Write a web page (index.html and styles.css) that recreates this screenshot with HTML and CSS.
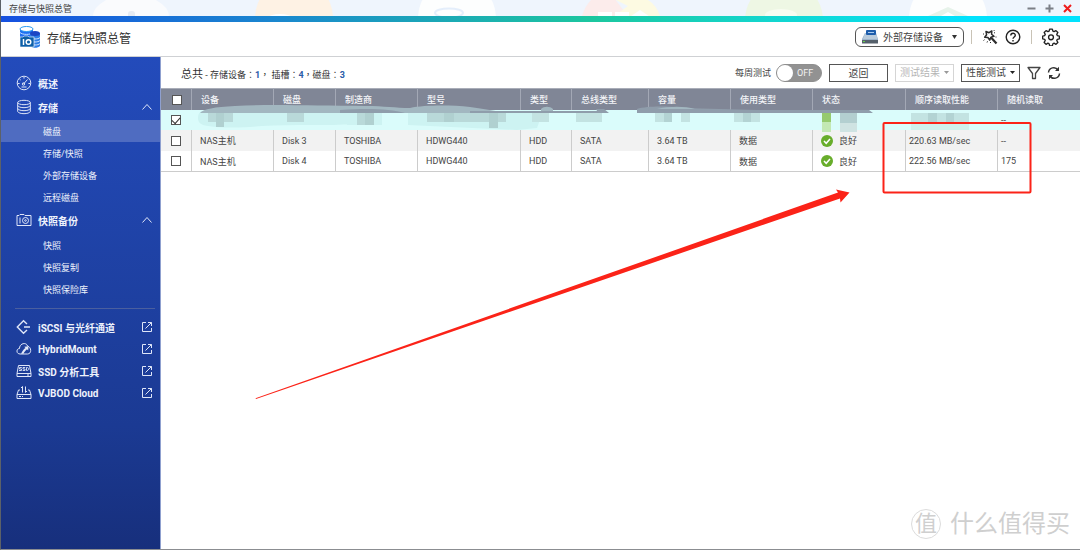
FILE: index.html
```html
<!DOCTYPE html>
<html lang="zh-CN">
<head>
<meta charset="utf-8">
<meta name="viewport" content="width=device-width, initial-scale=1">
<title>存储与快照总管</title>
<link rel="stylesheet" href="styles.css">
</head>
<body>
<div class="window">
  <div class="titlebar">
    <svg class="desktop-art" width="1080" height="16" viewBox="0 0 1080 16" aria-hidden="true">
      <ellipse cx="130" cy="16" rx="38" ry="21" fill="#fafbfd"/>
      <rect x="127" y="11" width="7" height="8" rx="3" fill="#e6ebf3"/>
      <circle cx="293" cy="18" r="39" fill="#fef2e4"/>
      <ellipse cx="279" cy="17" rx="11" ry="3" fill="#fff"/>
      <circle cx="456" cy="18" r="39" fill="#fdfefe"/>
      <ellipse cx="448" cy="13" rx="14" ry="4.500" fill="none" stroke="#e4eefb" stroke-width="2"/>
      <path d="M581 16c4-14 15-24 26-26l16 21-10 5z" fill="#fceceb"/>
      <path d="M607-4h30c12 3 19 10 22 20h-46l14-10z" fill="#fdfae2"/>
      <path d="M597 12h14v4h-14zM614 12h14v4h-14zM630 16l9-6 9 6z" fill="#fff"/>
      <circle cx="783" cy="20" r="39" fill="#eef7e4"/>
      <ellipse cx="780" cy="15" rx="16" ry="6" fill="#f8fcf1"/>
      <circle cx="947" cy="18" r="39" fill="#fdfefe"/>
      <path d="M927 16l20-9 20 9z" fill="#e7f3ea"/><path d="M940 16l7-4 7 4z" fill="#fff"/>
    </svg>
    <span class="window-title">存储与快照总管</span>
    <div class="window-buttons">
      <button class="window-button" aria-label="最小化"><svg width="9" height="9" viewBox="0 0 9 9"><path d="M.5 4.500h8" stroke="#7b7f86" stroke-width="2"/></svg></button>
      <button class="window-button" aria-label="最大化"><svg width="9" height="9" viewBox="0 0 9 9"><path d="M.5 4.500h8M4.500.5v8" stroke="#7b7f86" stroke-width="2"/></svg></button>
      <button class="window-button" aria-label="关闭"><svg width="9" height="9" viewBox="0 0 9 9"><path d="M1 1l7 7M8 1L1 8" stroke="#ee1c1c" stroke-width="2"/></svg></button>
    </div>
  </div>
  <div class="accent-strip"></div>

  <header class="app-header">
    <svg class="app-logo" width="22" height="22" viewBox="0 0 22 22" aria-hidden="true">
      <path d="M1 3v9h13V3z" fill="#1f6ff2"/>
      <ellipse cx="7.500" cy="3" rx="6.500" ry="2.500" fill="#fff" stroke="#2b9bf0"/>
      <path d="M1 6.500c2 2.500 11 2.500 13 0" fill="none" stroke="#bfe0ff"/>
      <path d="M11 7v13c2 2.400 8 2.400 10 0V7z" fill="#2f7fe6"/>
      <ellipse cx="16" cy="7.500" rx="5" ry="2.500" fill="#1c46c4"/>
      <path d="M11 11.500c2 2 8 2 10 0M11 14.500c2 2 8 2 10 0M11 17.500c2 2 8 2 10 0" fill="none" stroke="#cfe4ff"/>
      <path d="M1 11h3l1-1h4l1 1h5v10H1z" fill="#0c5fa8" stroke="#fff" stroke-width=".6"/>
      <path d="M4.500 13v6" stroke="#fff" stroke-width="1.500"/><circle cx="9.500" cy="16" r="2.300" fill="none" stroke="#fff" stroke-width="1.500"/>
    </svg>
    <h1 class="app-title">存储与快照总管</h1>
    <div class="header-tools">
      <div class="device-picker">
        <svg width="16" height="14" viewBox="0 0 16 14" aria-hidden="true"><path d="M3 3h11l2 6v4H0V9z" fill="#9db4cb"/><path d="M3 3h11l1.500 6H1z" fill="#b9cbdc"/><path d="M0 10h16v3.500H0z" fill="#56616c"/><path d="M1 11.500h2" stroke="#65d34a"/><rect x="4" width="10" height="5" rx="1" fill="#1d5dac"/><path d="M6 2.500h6" stroke="#a9ccf2"/></svg>
        <select class="device-select" aria-label="外部存储设备"><option>外部存储设备</option></select>
        <svg class="caret" width="5" height="4" viewBox="0 0 5 4" aria-hidden="true"><path d="M0 0h5L2.500 4z" fill="#333"/></svg>
      </div>
      <span class="separator"></span>
      <button class="icon-button" aria-label="工具"><svg width="16" height="16" viewBox="0 0 16 16" fill="none" stroke="#2c2c2c" stroke-linejoin="round"><path d="M4 2.500l3 1.200L9.800 2l-.2 3.200L12 7.300l-3 .8-1.300 3-1.800-2.600-3.200-.2 1.900-2.600z" stroke-width="1.500"/><path d="M9 8.500l5.500 6" stroke-width="2.200"/><path d="M1 5h1M1.500 11.500l1-.8M5 13.500l.5-1.200M13 3.500l-1 .6M14.500 8h-1M12.500 1l-.7.9M8.500 14v-1" stroke-width="1"/></svg></button>
      <button class="icon-button" aria-label="帮助"><svg width="16" height="16" viewBox="0 0 16 16" fill="none" stroke="#222" stroke-width="1.400"><circle cx="8" cy="8" r="6.800"/><path d="M5.800 6.500c0-3 4.500-3 4.500-.3C10.300 8 8 7.900 8 9.800M8 11v1.500"/></svg></button>
      <span class="separator"></span>
      <button class="icon-button" aria-label="设置"><svg width="18" height="18" viewBox="0 0 20 20" fill="none" stroke="#222" stroke-width="1.500" stroke-linejoin="round"><path d="M8.500 1.200h3l.6 2.300 1.300.6 2.100-1.200 2.100 2.100-1.200 2.100.6 1.300 2.300.6v3l-2.300.6-.6 1.300 1.200 2.100-2.100 2.100-2.100-1.200-1.300.6-.6 2.300h-3l-.6-2.300-1.300-.6-2.100 1.200-2.100-2.100 1.200-2.100-.6-1.300-2.300-.6v-3L3 8.400l.6-1.300L2.400 5l2.100-2.100 2.100 1.200 1.300-.6z"/><circle cx="10" cy="10.300" r="2.700"/></svg></button>
    </div>
  </header>

  <div class="workspace">
    <nav class="sidebar" aria-label="主菜单">
      <a class="nav-group" href="#overview"><svg class="nav-icon" width="16" height="16" viewBox="0 0 16 16"><circle cx="8" cy="8" r="6.800"/><path d="M8 2v1.600M3.500 4l1.200 1M2 8.500h1.600M12.400 8.500H14M7.500 9l4-4.500M5.500 12h5"/><circle cx="7.500" cy="9" r="1.200"/></svg>概述</a>
      <a class="nav-group" href="#storage"><svg class="nav-icon" width="16" height="16" viewBox="0 0 16 16"><ellipse cx="8" cy="3.500" rx="6.300" ry="2.200"/><path d="M1.700 3.500v9c1 2.900 11.600 2.900 12.600 0v-9M1.700 6.500c1 2.900 11.600 2.900 12.600 0M1.700 9.500c1 2.900 11.600 2.900 12.600 0"/></svg>存储<svg class="chevron" width="10" height="6" viewBox="0 0 10 6"><path d="M.5 5.500l4.500-5 4.500 5"/></svg></a>
      <a class="nav-item nav-item-active" href="#disks" aria-current="page">磁盘</a>
      <a class="nav-item" href="#snapshots">存储/快照</a>
      <a class="nav-item" href="#external">外部存储设备</a>
      <a class="nav-item" href="#remote">远程磁盘</a>
      <a class="nav-group nav-group-spaced" href="#backup"><svg class="nav-icon" width="16" height="16" viewBox="0 0 16 16"><path d="M1 3.500h2l1-1h4l1 1h6v10H1zM4 5.500v6"/><circle cx="9.500" cy="8.500" r="3"/><circle cx="9.500" cy="8.500" r=".8"/></svg>快照备份<svg class="chevron" width="10" height="6" viewBox="0 0 10 6"><path d="M.5 5.500l4.500-5 4.500 5"/></svg></a>
      <a class="nav-item" href="#snapshot">快照</a>
      <a class="nav-item" href="#replica">快照复制</a>
      <a class="nav-item" href="#vault">快照保险库</a>
      <hr class="nav-divider">
      <a class="nav-link" href="#iscsi"><svg class="nav-icon" width="16" height="16" viewBox="0 0 16 16"><path d="M11 5L7.500 1.700 1.300 8l6.200 6.300L11 11M8 8h6" stroke-width="1.400"/></svg>iSCSI 与光纤通道<svg class="external" width="12" height="12" viewBox="0 0 12 12"><path d="M5 1.500H1.500v9h9V7M7 1.500h3.500V5M10.500 1.500L4.500 7.500"/></svg></a>
      <a class="nav-link" href="#hybridmount"><svg class="nav-icon" width="16" height="16" viewBox="0 0 16 16"><path d="M4 13c-4 0-4-5.500-.5-5.500C3.500 2 10.500 1 11.500 5c4 1 4.500 8 0 8z"/><path d="M5 12.800C6.500 9.500 8 8 9.500 7L8.300 5.800l4.200-.6-.3 4.200-1.200-1.200c-1.500 1.200-3 3-3.500 4.600z" fill="#e3e9f8" stroke="none"/></svg>HybridMount<svg class="external" width="12" height="12" viewBox="0 0 12 12"><path d="M5 1.500H1.500v9h9V7M7 1.500h3.500V5M10.500 1.500L4.500 7.500"/></svg></a>
      <a class="nav-link" href="#ssd"><svg class="nav-icon" width="16" height="16" viewBox="0 0 16 16"><path d="M2.500 2.500h11l1.500 8v3H1v-3zM1 10.500h14M11 12h2"/><path d="M5.800 4.500H3.500V6h2v1.500H3M9.200 4.500H7V6h2v1.500H6.700M10.500 4.500v3c3 .2 3-3.200 0-3z" stroke-width=".9"/></svg>SSD 分析工具<svg class="external" width="12" height="12" viewBox="0 0 12 12"><path d="M5 1.500H1.500v9h9V7M7 1.500h3.500V5M10.500 1.500L4.500 7.500"/></svg></a>
      <a class="nav-link" href="#vjbod"><svg class="nav-icon" width="16" height="16" viewBox="0 0 16 16"><path d="M4 5H2.500L1 9.500v4h14v-4L13.500 5H12M1 9.500h14M3 11.500h2M6 11.500h1M6.500 7.500v-6L5 3M9.500 1.500v6L11 6"/></svg>VJBOD Cloud<svg class="external" width="12" height="12" viewBox="0 0 12 12"><path d="M5 1.500H1.500v9h9V7M7 1.500h3.500V5M10.500 1.500L4.500 7.500"/></svg></a>
    </nav>

    <main class="content">
      <div class="toolbar">
        <p class="summary"><span class="summary-label">总共</span> - 存储设备<span lang="zh-TW" class="mark">：</span><b class="count">1</b><span lang="zh-TW" class="mark">，</span> 插槽<span lang="zh-TW" class="mark">：</span><b class="count">4</b><span lang="zh-TW" class="mark">，</span>磁盘<span lang="zh-TW" class="mark">：</span><b class="count">3</b></p>
        <div class="toolbar-actions">
          <label class="weekly">每周测试
            <input class="weekly-input" type="checkbox" role="switch">
            <span class="switch"><span class="switch-knob"></span>OFF</span>
          </label>
          <button class="button">返回</button>
          <div class="picker picker-disabled"><select class="picker-select" aria-label="测试结果" disabled><option>测试结果</option></select><svg class="caret" width="5" height="3" viewBox="0 0 5 3" aria-hidden="true"><path d="M0 0h5L2.500 3z" fill="#999"/></svg></div>
          <div class="picker"><select class="picker-select" aria-label="性能测试"><option>性能测试</option></select><svg class="caret" width="5" height="3" viewBox="0 0 5 3" aria-hidden="true"><path d="M0 0h5L2.500 3z" fill="#222"/></svg></div>
          <button class="icon-button" aria-label="筛选"><svg width="14" height="14" viewBox="0 0 14 14" fill="none" stroke="#444" stroke-width="1.300" stroke-linejoin="round"><path d="M1 1.500h12L8.500 7.500v5h-3v-5z"/></svg></button>
          <button class="icon-button" aria-label="刷新"><svg width="14" height="14" viewBox="0 0 14 14" fill="none" stroke="#333" stroke-width="1.500"><path d="M1.500 6.500A5.200 5.200 0 0 1 11 4M12.500 7.500A5.200 5.200 0 0 1 3 10"/><path d="M12 .8V5H8zM2 13.200V9h4z" fill="#333" stroke="none"/></svg></button>
        </div>
      </div>

      <table class="disks">
        <colgroup><col class="w-check"><col class="w-wide"><col class="w-disk"><col class="w-wide"><col class="w-model"><col class="w-type"><col class="w-bus"><col class="w-wide"><col class="w-wide"><col class="w-status"><col class="w-speed"><col></colgroup>
        <thead>
          <tr><th><input class="check" type="checkbox" aria-label="全选"></th><th>设备</th><th>磁盘</th><th>制造商</th><th>型号</th><th>类型</th><th>总线类型</th><th>容量</th><th>使用类型</th><th>状态</th><th>顺序读取性能</th><th>随机读取</th></tr>
        </thead>
        <tbody>
          <tr class="row-selected"><td><input class="check" type="checkbox" checked aria-label="选择磁盘"></td><td></td><td></td><td></td><td></td><td></td><td></td><td></td><td></td><td></td><td></td><td class="reading">--</td></tr>
          <tr class="row-alt"><td><input class="check" type="checkbox" aria-label="选择 Disk 3"></td><td>NAS主机</td><td>Disk 3</td><td>TOSHIBA</td><td>HDWG440</td><td>HDD</td><td>SATA</td><td>3.64 TB</td><td>数据</td><td><span class="status"><svg width="12" height="12" viewBox="0 0 12 12" aria-hidden="true"><circle cx="6" cy="6" r="6" fill="#68ad2b"/><path d="M3 6l2.200 2.300L9 4" fill="none" stroke="#fff" stroke-width="1.500"/></svg>良好</span></td><td class="reading">220.63 MB/sec</td><td class="reading">--</td></tr>
          <tr><td><input class="check" type="checkbox" aria-label="选择 Disk 4"></td><td>NAS主机</td><td>Disk 4</td><td>TOSHIBA</td><td>HDWG440</td><td>HDD</td><td>SATA</td><td>3.64 TB</td><td>数据</td><td><span class="status"><svg width="12" height="12" viewBox="0 0 12 12" aria-hidden="true"><circle cx="6" cy="6" r="6" fill="#68ad2b"/><path d="M3 6l2.200 2.300L9 4" fill="none" stroke="#fff" stroke-width="1.500"/></svg>良好</span></td><td class="reading">222.56 MB/sec</td><td class="reading">175</td></tr>
        </tbody>
      </table>
    </main>
  </div>
</div>

<svg class="markup" width="1080" height="550" viewBox="0 0 1080 550" aria-hidden="true">
  <g>
    <path d="M198 118c0-6 4-8 10-8h140l4 3v11c-20 2-60 0-90 2-20 2-40 2-54 0-8-1-10-4-10-8zM347 111h35v14h-35zM408 111h135l-6 17-20 2-109-5z" fill="#cdf3f2"/>
    <path d="M200 113c4-4 14-6 35-7 40-2 80 0 130 0 20 0 30 2 45 2 15-3 40-3 60-1 14 2 26 4 37 6z" fill="#a2b7c0"/>
    <path d="M340 110c30-2 50-1 65 3h-65zM470 111h72v2h-72zM596 109h8l5 4h-72v-2h60zM637 109c10-3 30-3 45-1l75 2h112l4 3H637z" fill="#8f9dab"/>
    <path d="M541 109c3-3 9-3 12 0v2h-12zM657 109c12-3 28-3 38 0z" fill="#a2b7c0"/>
    <path d="M208 113h25v9h-25zM287 113h17v9h-17zM357 113h17v12h-17zM427 113h53v9h-53zM480 113h26v9h-26z" fill="#b9d9d9"/>
    <path d="M216 113h8v14h-8zM365 113h9v12h-9zM444 113h10v9h-10zM489 113h9v15h-9z" fill="#b0d0d0"/>
    <path d="M532 113h17v9h-17zM576 113h26v9h-26zM655 113h17v9h-17zM681 113h9v9h-9zM734 113h26v9h-26zM911 113h58v10h-58z" fill="#c3e3e2"/>
    <path d="M664 113h8v9h-8zM743 113h8v9h-8zM928 113h9v10h-9zM946 113h8v10h-8z" fill="#b3d3d3"/>
    <path d="M911 123h58v7h-58z" fill="#d0f0ec"/>
    <path d="M822 113h9v9h-9z" fill="#96ca6e"/><path d="M822 122h9v10h-9z" fill="#c3e8b4"/>
    <path d="M840 113h17v10h-17z" fill="#b3cfd0"/><path d="M840 123h17v9h-17z" fill="#cfe3e2"/>
  </g>
  <rect x="883.500" y="123" width="147" height="69.500" rx="1" fill="none" stroke="#fb2318" stroke-width="2"/>
  <path d="M255.500 398.300L838 192.500 836 189.500 849.500 192.500 840.500 202.500 840 198.500 256 399z" fill="#fb2318"/>
</svg>
<div class="watermark"><span class="watermark-badge">值</span>什么值得买</div>
</body>
</html>
```

FILE: styles.css
```css
* {
  box-sizing: border-box;
}

body {
  margin: 0;
  position: relative;
  font-family: Roboto, "Noto Sans CJK SC", sans-serif;
  font-size: 9px;
  color: #444;
  background: #fff;
}

button,
select {
  font: inherit;
  color: inherit;
  padding: 0;
  border: 0;
  background: none;
  appearance: none;
}

svg {
  display: block;
  flex: none;
}

.window {
  display: flex;
  flex-direction: column;
  min-height: 100vh;
  border-left: 1px solid #5c6168;
  border-bottom: 1px solid #8b8d91;
}

/* Title bar */
.titlebar {
  position: relative;
  display: flex;
  align-items: center;
  justify-content: space-between;
  height: 16px;
  padding: 0 8px;
  overflow: hidden;
  background: #eff5fd;
}

.desktop-art {
  position: absolute;
  top: 0;
  left: 0;
}

.window-title,
.window-buttons {
  position: relative;
}

.window-buttons {
  display: flex;
  gap: 9px;
}

.accent-strip {
  height: 6px;
  background: linear-gradient(90deg, #1550e0 0%, #1a86cf 25%, #1cc79f 55%, #14d5cb 70%, #02e2fd 90%);
}

/* Application header */
.app-header {
  display: flex;
  align-items: center;
  gap: 6px;
  height: 35px;
  padding: 0 20px 4px 18px;
  border-bottom: 1px solid #cfd1d4;
}

.app-title {
  margin: 0;
  font-size: 12px;
  font-weight: 400;
  color: #333;
}

.header-tools {
  display: flex;
  align-items: center;
  gap: 7px;
  margin-left: auto;
}

.device-picker {
  display: flex;
  align-items: center;
  gap: 5px;
  height: 20px;
  padding: 0 6px;
  border: 1px solid #555;
  border-radius: 6px;
}

.device-select {
  width: 64px;
  font-size: 10px;
}

.separator {
  width: 1px;
  height: 14px;
  margin: 0 3px;
  background: #c9c3b6;
}

.device-picker + .separator {
  margin-left: 0;
}

/* Sidebar */
.workspace {
  display: flex;
  flex: 1;
}

.sidebar {
  display: flex;
  flex-direction: column;
  width: 160px;
  flex: none;
  padding-top: 15px;
  border-right: 1px solid #8fa0cf;
  background: linear-gradient(#234bbb, #1b3a93 75%, #172f7c);
}

.sidebar a {
  display: flex;
  align-items: center;
  color: #eef2fc;
  text-decoration: none;
}

.nav-group,
.nav-link {
  gap: 6px;
  height: 24px;
  padding: 0 8px 2px 15px;
  font-size: 10px;
  font-weight: 700;
}

.nav-group-spaced {
  height: 26px;
}

.nav-link {
  height: 22px;
  padding: 0 7px 0 15px;
}

.nav-item {
  height: 22px;
  padding-left: 42px;
}

.nav-item-active {
  background: #4f6cc1;
}

.nav-divider {
  width: 140px;
  margin: 8px 0 7px 14px;
  border: 0;
  border-top: 1px solid #4a5f9f;
}

.nav-icon,
.chevron,
.external {
  fill: none;
  stroke: #dfe6f8;
}

.chevron,
.external {
  margin-left: auto;
}

/* Toolbar */
.content {
  flex: 1;
  min-width: 0;
}

.toolbar {
  display: flex;
  align-items: center;
  justify-content: space-between;
  height: 31px;
  padding: 0 19px 0 20px;
}

.summary {
  margin: 0;
  color: #333;
}

.summary-label {
  font-size: 11px;
}

.mark {
  font-family: "Noto Sans CJK TC", sans-serif;
}

.count {
  color: #2a5ba8;
}

.toolbar-actions {
  display: flex;
  align-items: center;
  gap: 7px;
}

.toolbar-actions .icon-button + .icon-button {
  margin-left: -1px;
}

.weekly {
  display: flex;
  align-items: center;
  gap: 5px;
}

.weekly-input {
  position: absolute;
  opacity: 0;
}

.switch {
  display: flex;
  align-items: center;
  gap: 4px;
  width: 46px;
  height: 18px;
  border: 1px solid #8f8f8f;
  border-radius: 9px;
  background: #929292;
  color: #f2f2f2;
}

.switch-knob {
  width: 16px;
  height: 16px;
  border-radius: 8px;
  background: #fff;
}

.button,
.picker {
  width: 59px;
  height: 18px;
  border: 1px solid #555;
  font-size: 10px;
}

.picker {
  display: flex;
  align-items: center;
  justify-content: space-between;
  padding: 0 4px;
}

.picker-select {
  width: 42px;
}

.picker-disabled {
  border-color: #d5d5d5;
  color: #b5b5b5;
}

.picker-select:disabled {
  opacity: 1;
}

/* Disk table */
.disks {
  width: 100%;
  table-layout: fixed;
  border-collapse: separate;
  border-spacing: 0;
  border-bottom: 1px solid #ccc;
}

.w-check { width: 31px; }
.w-wide { width: 82px; }
.w-disk { width: 62px; }
.w-model { width: 103px; }
.w-type { width: 51px; }
.w-bus { width: 77px; }
.w-status { width: 93px; }
.w-speed { width: 92px; }

.disks th,
.disks td {
  height: 20px;
  padding: 0 0 0 8px;
  border-right: 1px solid #ccc;
  font-weight: 400;
  text-align: left;
  white-space: nowrap;
}

.disks th {
  height: 22px;
  padding-left: 9px;
  border-right-color: #a3a8b5;
  border-top: 1px solid #a9adb8;
  background: #808696;
  color: #f4f5f8;
  font-weight: 500;
}

.disks tr > :last-child {
  border-right: 0;
}

.disks .reading {
  padding-left: 3px;
}

.row-selected {
  background: #dafcfb;
}

.disks .row-selected td {
  height: 20px;
  border-right-color: transparent;
}

.row-alt {
  background: #f2f2f2;
}

.disks .row-alt td {
  height: 21px;
}

.check {
  display: grid;
  place-items: center;
  width: 10px;
  height: 10px;
  margin: 0 0 0 2px;
  border: 1px solid #555;
  background: #fff;
  appearance: none;
}

.check:checked::before {
  content: "";
  width: 7px;
  height: 4px;
  margin-bottom: 2px;
  border-left: 1px solid #333;
  border-bottom: 1px solid #333;
  transform: rotate(-48deg);
}

.status {
  display: flex;
  align-items: center;
  gap: 6px;
}

/* Marks drawn over the page */
.markup {
  position: absolute;
  top: 0;
  left: 0;
  pointer-events: none;
}

.watermark {
  position: absolute;
  right: 10px;
  bottom: 10px;
  display: flex;
  align-items: center;
  gap: 9px;
  font-size: 24px;
  line-height: 32px;
  font-weight: 400;
  color: #cfcfcf;
  pointer-events: none;
}

.watermark-badge {
  width: 30px;
  height: 30px;
  border: 1px solid #dcdcdc;
  border-radius: 15px;
  font-size: 22px;
  line-height: 28px;
  text-align: center;
}
```
